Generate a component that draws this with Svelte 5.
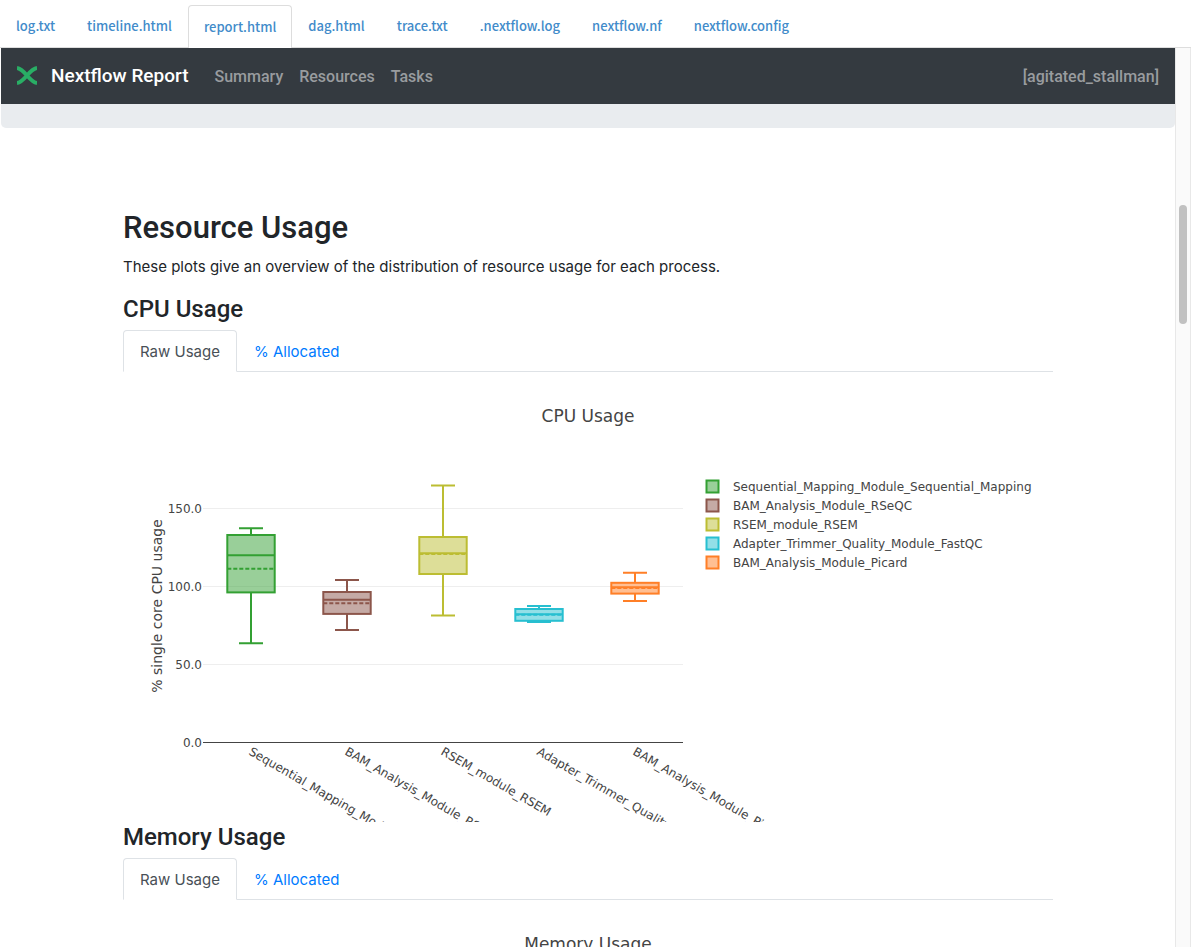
<script>
  const files = [
    'log.txt',
    'timeline.html',
    'report.html',
    'dag.html',
    'trace.txt',
    '.nextflow.log',
    'nextflow.nf',
    'nextflow.config'
  ];
  const activeFile = 'report.html';
  const links = ['Summary', 'Resources', 'Tasks'];
  const views = ['Raw Usage', '% Allocated'];

  let selected = $state({ cpu: 'Raw Usage', memory: 'Raw Usage' });

  // Distances down the plot for each box: whisker ends, quartiles, median and mean.
  const series = [
    { name: 'Sequential_Mapping_Module_Sequential_Mapping', color: '#33a033', x: 128, max: 156.3, q3: 163, median: 183.2, mean: 196.7, q1: 220.4, min: 271.2 },
    { name: 'BAM_Analysis_Module_RSeQC', color: '#8c564b', x: 224, max: 208, q3: 220, median: 227.8, mean: 231.2, q1: 241.9, min: 258 },
    { name: 'RSEM_module_RSEM', color: '#bcbd32', x: 320, max: 113.4, q3: 165, median: 181.2, mean: 182, q1: 202, min: 243.4 },
    { name: 'Adapter_Trimmer_Quality_Module_FastQC', color: '#27bfd0', x: 416, max: 234, q3: 237, median: 242.2, mean: 242.8, q1: 248.8, min: 250 },
    { name: 'BAM_Analysis_Module_Picard', color: '#ff7f27', x: 512, max: 200.8, q3: 210.8, median: 215.3, mean: 216, q1: 221.6, min: 229 }
  ];
  const ticks = [
    { label: '150.0', y: 136.5 },
    { label: '100.0', y: 214.5 },
    { label: '50.0', y: 292.5 },
    { label: '0.0', y: 370.5 }
  ];
</script>

{#snippet tabs(key, label)}
  <div class="tabs" role="tablist" aria-label={label}>
    {#each views as view}
      <button
        type="button"
        role="tab"
        class:active={selected[key] === view}
        aria-selected={selected[key] === view}
        onclick={() => (selected[key] = view)}>{view}</button>
    {/each}
  </div>
{/snippet}

<div class="page">
  <nav class="files" aria-label="Files">
    {#each files as file}
      <a href="#{file}" class:active={file === activeFile}>{file}</a>
    {/each}
  </nav>

  <div class="frame">
    <div class="report">
      <header class="navbar">
        <a class="brand" href="#report">
          <svg viewBox="0 0 20 20" aria-hidden="true">
            <path d="M0 2C8 3 12 16 20 17M0 17C8 16 12 3 20 2" />
          </svg>
          Nextflow Report
        </a>
        <nav class="links" aria-label="Report sections">
          {#each links as link}
            <a href="#{link.toLowerCase()}">{link}</a>
          {/each}
        </nav>
        <span class="run">[agitated_stallman]</span>
      </header>
      <div class="band"></div>

      <main>
        <h2>Resource Usage</h2>
        <p>These plots give an overview of the distribution of resource usage for each process.</p>

        <h4>CPU Usage</h4>
        {@render tabs('cpu', 'CPU Usage')}
        <svg class="plot" viewBox="0 0 930 450" role="img" aria-label="CPU Usage">
          <text class="title" x="465" y="50">CPU Usage</text>
          {#each ticks as tick}
            <line class={tick.label === '0.0' ? 'axis' : 'grid'} x1="80" x2="560" y1={tick.y} y2={tick.y} />
            <text class="tick" x="79" y={tick.y + 4.5}>{tick.label}</text>
          {/each}
          <text class="ylabel" transform="translate(39 234) rotate(-90)">% single core CPU usage</text>
          {#each series as s}
            <g stroke={s.color} stroke-width="2" fill="none">
              <path d="M{s.x} {s.max}V{s.q3}M{s.x} {s.q1}V{s.min}M{s.x - 12} {s.max}h24M{s.x - 12} {s.min}h24" />
              <rect x={s.x - 23.7} y={s.q3} width="47.4" height={s.q1 - s.q3} fill={s.color} fill-opacity="0.5" />
              <path d="M{s.x - 23.7} {s.median}h47.4" />
              <path d="M{s.x - 23.7} {s.mean}h47.4" stroke-dasharray="4 2" />
            </g>
            <text class="xlabel" transform="translate({s.x - 3} 382) rotate(30)">{s.name}</text>
          {/each}
          {#each series as s, i}
            <rect x="583.5" y={108.5 + i * 19} width="12" height="12" stroke={s.color} stroke-width="2" fill={s.color} fill-opacity="0.5" />
            <text class="key" x="610" y={119 + i * 19}>{s.name}</text>
          {/each}
        </svg>

        <h4>Memory Usage</h4>
        {@render tabs('memory', 'Memory Usage')}
        <svg class="plot" viewBox="0 0 930 450" role="img" aria-label="Memory Usage">
          <text class="title" x="465" y="50">Memory Usage</text>
        </svg>
      </main>
    </div>
    <div class="track" aria-hidden="true"><div class="thumb"></div></div>
  </div>
</div>

<style>
  :global(body) {
    margin: 0;
    background: #fff;
  }
  * {
    box-sizing: border-box;
  }
  a {
    text-decoration: none;
  }
  .page {
    display: flex;
    flex-direction: column;
    height: 100vh;
    overflow: hidden;
    font-family: Inter, sans-serif;
    color: #212529;
  }
  .files {
    display: flex;
    flex: none;
    align-items: flex-end;
    padding-top: 4px;
    border-bottom: 1px solid #ddd;
    font: 500 13px/20px "Noto Sans CJK SC", sans-serif;
  }
  .files a {
    padding: 11px 15px;
    border: 1px solid transparent;
    border-bottom: 0;
    color: #428bca;
  }
  .files a.active {
    margin-bottom: -1px;
    border-color: #ddd;
    border-radius: 4px 4px 0 0;
    background: #fff;
  }
  .frame {
    display: flex;
    flex: 1;
    min-height: 0;
    padding-left: 1px;
  }
  .report {
    flex: 1;
    min-width: 0;
    overflow: hidden;
  }
  .navbar {
    display: flex;
    align-items: center;
    height: 56px;
    padding: 0 16px;
    background: #343a40;
    font: 500 16px/24px Roboto, Inter, sans-serif;
  }
  .brand {
    display: flex;
    align-items: center;
    gap: 14px;
    color: #fff;
    font-size: 19px;
  }
  .brand svg {
    width: 20px;
    height: 20px;
    fill: none;
    stroke: #29ae65;
    stroke-width: 4;
  }
  .links {
    display: flex;
    gap: 16px;
    margin-left: 26px;
  }
  .links a,
  .run {
    padding-top: 2px;
    color: #999c9f;
  }
  .run {
    margin-left: auto;
  }
  .band {
    height: 24px;
    border-radius: 0 0 5px 5px;
    background: #e9ecef;
  }
  main {
    max-width: 930px;
    margin: 80px auto 0;
  }
  h2,
  h4 {
    font-family: Roboto, Inter, sans-serif;
    font-weight: 500;
  }
  h2 {
    margin: 0 0 7px;
    font-size: 31px;
    line-height: 40px;
  }
  h4 {
    margin: 0 0 6px;
    font-size: 24px;
    line-height: 30px;
  }
  p {
    margin: 0 0 15px;
    font-size: 15px;
    line-height: 24px;
  }
  .tabs {
    display: flex;
    border-bottom: 1px solid #dee2e6;
  }
  .tabs button {
    margin-bottom: -1px;
    padding: 9px 16px 7px;
    border: 1px solid transparent;
    border-radius: 4px 4px 0 0;
    background: none;
    color: #007bff;
    font: 400 15px/24px Inter, sans-serif;
    cursor: pointer;
  }
  .tabs button.active {
    border-color: #dee2e6 #dee2e6 #fff;
    background: #fff;
    color: #495057;
  }
  .plot {
    display: block;
    width: 100%;
    overflow: hidden;
    fill: #444;
    font: 12px "DejaVu Sans", Verdana, sans-serif;
  }
  .title {
    font-size: 17px;
    text-anchor: middle;
  }
  .tick {
    text-anchor: end;
  }
  .ylabel {
    font-size: 14px;
    text-anchor: middle;
  }
  .grid {
    stroke: #eee;
  }
  .axis {
    stroke: #444;
  }
  .track {
    flex: none;
    width: 16px;
    padding: 157px 3px 0;
    border: solid #e8e8e8;
    border-width: 0 1px;
    background: #fafafa;
  }
  .thumb {
    height: 119px;
    border-radius: 4px;
    background: #c1c1c1;
  }
</style>
